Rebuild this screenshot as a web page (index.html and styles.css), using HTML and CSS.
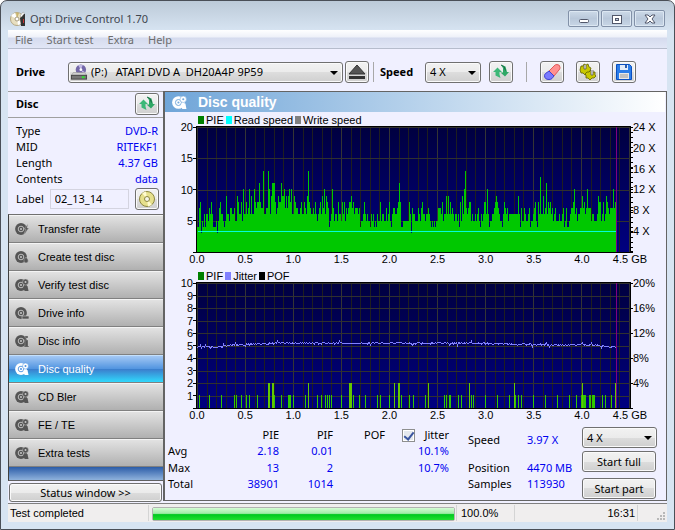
FILE: index.html
```html
<!DOCTYPE html>
<html lang="en">
<head>
  <meta charset="UTF-8" />
  <meta name="viewport" content="width=device-width, initial-scale=1.0"/>
  <title>Opti Drive Control 1.70</title>
  <link rel="stylesheet" href="styles.css">
</head>
<body>

  <svg class="sprite" aria-hidden="true">
    <symbol id="disc" viewBox="0 0 14 14">
      <circle cx="6" cy="7" r="5.900" fill="currentColor"/>
      <circle cx="6" cy="7" r="2.800" fill="none" stroke="var(--hole)" stroke-width="0.900"/>
      <circle cx="6" cy="7" r="1" fill="var(--hole)"/>
    </symbol>
    <symbol id="lens" viewBox="0 0 14 14">
      <use href="#disc"/>
      <circle cx="10.500" cy="4" r="3" fill="currentColor" stroke="var(--hole)" stroke-width="0.500"/>
      <circle cx="10.500" cy="4" r="1" fill="var(--hole)"/>
      <path d="M8.500 8h4l1 5h-4z" fill="currentColor"/>
    </symbol>
    <symbol id="refresh" viewBox="0 0 18 18">
      <path d="M1 9l4.500-4.500L10 9H7.500v2.500l1 3.500-5-2.500V9z" fill="#3cb878"/>
      <path d="M17 9l-4 4.500L8.500 9.500H11V5L9 2l4.500 1.500 1.500 5.500z" fill="#2fa866"/>
      <path d="M9 2l3 1.500 1.500 4" fill="none" stroke="#146b42"/>
    </symbol>
  </svg>

  <div class="window">
    <header class="titlebar">
      <svg class="app-icon" viewBox="0 0 16 16">
        <circle cx="7" cy="8" r="6.500" fill="#e8dfc0" stroke="#b4a884"/>
        <path d="M7 8L1 5a7 7 0 0 1 4-3zM7 8l5 4a7 7 0 0 1-4 2z" fill="#fff"/>
        <path d="M7 8L6 1.500l3 .5z" fill="#c9b56e"/>
        <circle cx="7" cy="8" r="2" fill="#fff" stroke="#a59b80"/>
        <path d="M10 7l4-4h1v12h-4z" fill="#333"/>
        <path d="M10 5l3-4 1.500 1-3 4z" fill="#fff" stroke="#888" stroke-width="0.500"/>
        <path d="M13 8h1v4h-1z" fill="#c33"/>
      </svg>
      <span class="title">Opti Drive Control 1.70</span>
      <div class="window-buttons">
        <button aria-label="Minimize"><svg viewBox="0 0 12 12"><rect x="1.500" y="6.500" width="9" height="3" rx="1" fill="#fff" stroke="#51576a"/></svg></button>
        <button aria-label="Maximize"><svg viewBox="0 0 12 12"><rect x="1.500" y="2.500" width="9" height="8" fill="#fff" stroke="#51576a"/><rect x="4.500" y="5.500" width="3" height="2" fill="#c2cee0" stroke="#51576a"/></svg></button>
        <button aria-label="Close"><svg viewBox="0 0 12 12"><path d="M1 2h3l2 2 2-2h3L8 6l3 4H8L6 8l-2 2H1l3-4z" fill="#fff" stroke="#51576a"/></svg></button>
      </div>
    </header>

    <nav class="menubar">
      <button>File</button>
      <button>Start test</button>
      <button>Extra</button>
      <button>Help</button>
    </nav>

    <div class="toolbar">
      <label class="strong drive-label" for="drive">Drive</label>
      <div class="dropdown drive-select">
        <svg class="drive-icon" viewBox="0 0 18 18">
          <circle cx="11" cy="6" r="5.500" fill="#7468a8"/>
          <path d="M11 6L8 1h5zM11 6l5 3-2 2z" fill="#c4bbe6"/>
          <circle cx="11" cy="6" r="1.500" fill="#fff"/>
          <path d="M3 9h12l2 3H1z" fill="#d0d0d0" stroke="#888" stroke-width="0.500"/>
          <rect x="1" y="12" width="16" height="4" fill="#777" stroke="#444"/>
          <rect x="12" y="13" width="3" height="2" fill="#2fe02f"/>
        </svg>
        <select id="drive"><option>(P:) &nbsp; ATAPI DVD A &nbsp;DH20A4P 9P59</option></select>
      </div>
      <button class="tool" aria-label="Eject">
        <svg viewBox="0 0 18 18"><path d="M9 2l8 9H1z" fill="#555" stroke="#333"/><path d="M1 13h16v3H1z" fill="#333"/></svg>
      </button>
      <span class="divider"></span>
      <label class="strong speed-label" for="speed">Speed</label>
      <div class="dropdown speed-select">
        <select id="speed"><option>4 X</option></select>
      </div>
      <button class="tool" aria-label="Refresh"><svg viewBox="0 0 18 18"><use href="#refresh"/></svg></button>
      <span class="divider wide"></span>
      <button class="tool" aria-label="Erase">
        <svg viewBox="0 0 18 18">
          <path d="M6 8l5-5q1-1.500 3-1.500 3 0 3 3 0 1.500-1 2.500l-5 6z" fill="#ff9090" stroke="#e05858"/>
          <path d="M6 8l5 5-2 2.500q-1 1-3 1-4.500 0-4.500-4 0-1 1-2z" fill="#7a7aff" stroke="#4040d0"/>
        </svg>
      </button>
      <button class="tool spaced" aria-label="Options">
        <svg viewBox="0 0 18 18">
          <g fill="#c8c800" stroke="#5e5e00" stroke-width="0.800">
            <path d="M2 3l2 0 1-2 2 1 2-1 1 3 2 1-1 3-1 3-2 0-2 1-2-2-2 0-1-3z"/>
            <path d="M8 9l2 0 2-2 2 2 2 0 0 3 1 1-2 2-2 0-2 2-2-2-2 0 0-3-1-1z"/>
          </g>
          <path d="M5 2v4h2V2M12 7v5h2V7" fill="#eee" stroke="#555" stroke-width="0.800"/>
        </svg>
      </button>
      <button class="tool spaced" aria-label="Save">
        <svg viewBox="0 0 18 18">
          <path d="M1.500 1.500h13l2 2v13h-15z" fill="#2b7de9" stroke="#0b4fc0"/>
          <rect x="5" y="2" width="8" height="5" fill="#e4ecf8"/><rect x="10" y="2" width="2" height="3" fill="#2b5db0"/>
          <rect x="4" y="10" width="10" height="6" fill="#e8e8e8"/><path d="M5 12h8M5 14h8" stroke="#999"/>
        </svg>
      </button>
    </div>

    <div class="content">
      <aside class="sidebar">
        <div class="disc-head">
          <span class="strong">Disc</span>
          <button class="tool" aria-label="Refresh disc"><svg viewBox="0 0 18 18"><use href="#refresh"/></svg></button>
        </div>
        <dl class="disc-info">
          <div><dt>Type</dt><dd>DVD-R</dd></div>
          <div><dt>MID</dt><dd>RITEKF1</dd></div>
          <div><dt>Length</dt><dd>4.37 GB</dd></div>
          <div><dt>Contents</dt><dd>data</dd></div>
        </dl>
        <div class="disc-label">
          <label for="label">Label</label>
          <input type="text" id="label" value="02_13_14">
          <button class="tool" aria-label="Edit label">
            <svg viewBox="0 0 18 18">
              <circle cx="9" cy="9" r="7.500" fill="#e6e08c" stroke="#8c8640"/>
              <path d="M9 9L4 3l4-1.500zM9 9l5 6-4 1.500z" fill="#fffbd0"/>
              <circle cx="9" cy="9" r="2.500" fill="#f6f6e8" stroke="#8c8640"/>
            </svg>
          </button>
        </div>
        <nav class="tests">
          <button><svg viewBox="0 0 14 14"><use href="#disc"/><path d="M13 2L9 7h2l-2 5 5-6h-2z" fill="currentColor" stroke="#ccc" stroke-width="0.400"/></svg>Transfer rate</button>
          <button><svg viewBox="0 0 14 14"><use href="#disc"/><path d="M11 7q3 3 2 5-2 2-4 0-1-2 2-5z" fill="currentColor" stroke="#ccc" stroke-width="0.400"/></svg>Create test disc</button>
          <button><svg viewBox="0 0 14 14"><use href="#lens"/></svg>Verify test disc</button>
          <button><svg viewBox="0 0 14 14"><use href="#disc"/><path d="M7 10h7v3H7z" fill="currentColor" stroke="#ccc" stroke-width="0.600"/></svg>Drive info</button>
          <button><svg viewBox="0 0 14 14"><use href="#disc"/><path d="M10 2h3v2h-3zM9 6h4v6h1v1H9v-1h1V7H9z" fill="currentColor" stroke="#ccc" stroke-width="0.300"/></svg>Disc info</button>
          <button class="active"><svg viewBox="0 0 14 14"><use href="#lens"/></svg>Disc quality</button>
          <button><svg viewBox="0 0 14 14"><use href="#lens"/></svg>CD Bler</button>
          <button><svg viewBox="0 0 14 14"><use href="#lens"/></svg>FE / TE</button>
          <button><svg viewBox="0 0 14 14"><use href="#lens"/></svg>Extra tests</button>
        </nav>
        <button class="push status-toggle">Status window &gt;&gt;</button>
      </aside>

      <main class="panel">
        <h1><svg viewBox="0 0 14 14"><use href="#lens"/></svg>Disc quality</h1>

        <section class="chart">
          <div class="legend"><i class="green"></i>PIE<i class="cyan"></i>Read speed<i class="gray"></i>Write speed</div>
          <div class="y-axis left"><span>20</span><span>15</span><span>10</span><span>5</span><span></span></div>
          <svg class="plot" id="pie-plot" viewBox="0 0 433 125" preserveAspectRatio="none"></svg>
          <div class="y-axis right fine"><span>24 X</span><span>20 X</span><span>16 X</span><span>12 X</span><span>8 X</span><span>4 X</span><span></span></div>
          <div class="x-axis"><span>0.0</span><span>0.5</span><span>1.0</span><span>1.5</span><span>2.0</span><span>2.5</span><span>3.0</span><span>3.5</span><span>4.0</span><span>4.5 GB</span></div>
        </section>

        <section class="chart">
          <div class="legend"><i class="green"></i>PIF<i class="violet"></i>Jitter<i class="black"></i>POF</div>
          <div class="y-axis left"><span>10</span><span>9</span><span>8</span><span>7</span><span>6</span><span>5</span><span>4</span><span>3</span><span>2</span><span>1</span><span></span></div>
          <svg class="plot" id="pif-plot" viewBox="0 0 433 125" preserveAspectRatio="none"></svg>
          <div class="y-axis right"><span>20%</span><span>16%</span><span>12%</span><span>8%</span><span>4%</span><span></span></div>
          <div class="x-axis"><span>0.0</span><span>0.5</span><span>1.0</span><span>1.5</span><span>2.0</span><span>2.5</span><span>3.0</span><span>3.5</span><span>4.0</span><span>4.5 GB</span></div>
        </section>

        <div class="results">
          <table>
            <tr><th></th><th>PIE</th><th>PIF</th><th>POF</th>
              <th><label class="jitter"><input type="checkbox" checked>Jitter</label></th></tr>
            <tr><th>Avg</th><td>2.18</td><td>0.01</td><td></td><td>10.1%</td></tr>
            <tr><th>Max</th><td>13</td><td>2</td><td></td><td>10.7%</td></tr>
            <tr><th>Total</th><td>38901</td><td>1014</td><td></td><td></td></tr>
          </table>
          <dl class="progress-info">
            <dt class="first">Speed</dt><dd class="first">3.97 X</dd>
            <dt>Position</dt><dd>4470 MB</dd>
            <dt>Samples</dt><dd>113930</dd>
          </dl>
          <div class="actions">
            <div class="dropdown"><select aria-label="Test speed"><option>4 X</option></select></div>
            <button class="push">Start full</button>
            <button class="push">Start part</button>
          </div>
        </div>
      </main>
    </div>

    <footer class="statusbar">
      <span class="message">Test completed</span>
      <div class="bar"><div class="fill" style="width: 100%"></div></div>
      <span class="percent">100.0%</span>
      <span class="clock">16:31</span>
      <svg class="grip" viewBox="0 0 10 10"><path d="M7 1h2v2H7zM4 4h2v2H4zM7 4h2v2H7zM1 7h2v2H1zM4 7h2v2H4zM7 7h2v2H7z" fill="#b8b8b8"/></svg>
    </footer>
  </div>

  <script src="script.js"></script>
</body>
</html>
```
FILE: styles.css
```css
* {
  box-sizing: border-box;
}

body {
  margin: 0;
  background: #fff;
  color: #000;
  font: 11px/16px 'Noto Sans', 'Open Sans', sans-serif;
}

button, select, input {
  font: inherit;
  color: inherit;
}

.sprite {
  position: absolute;
  width: 0;
  height: 0;
}

.window {
  display: flex;
  flex-direction: column;
  min-height: 100vh;
  padding: 0 7px 7px;
  border: 1px solid #4a4f57;
  border-radius: 7px 7px 0 0;
  background: linear-gradient(#bccad8, #d7e4f2 30px);
}

/* title bar and menu */
.titlebar {
  display: flex;
  align-items: center;
  height: 29px;
  padding: 6px 2px 0;
}

.app-icon {
  width: 16px;
  height: 16px;
}

.title {
  margin-left: 4px;
  color: #3f454e;
}

.window-buttons {
  display: flex;
  gap: 2px;
  margin-left: auto;
}

.window-buttons button {
  display: flex;
  align-items: center;
  justify-content: center;
  width: 31px;
  height: 17px;
  padding: 0;
  border: 1px solid #8291a8;
  border-radius: 2px;
  background: linear-gradient(#cddae8, #b9c8da 50%, #c8d6e6);
  box-shadow: inset 0 0 0 1px #dce7f2;
}

.window-buttons svg {
  width: 12px;
  height: 12px;
}

.menubar {
  display: flex;
  gap: 14px;
  height: 19px;
  padding: 2px 7px 0;
  border-bottom: 1px solid #b6bccc;
  background: linear-gradient(#fff, #eef1f9 7px, #d5dbee 8px, #e1e6f6);
}

.menubar button {
  padding: 0;
  border: 0;
  background: none;
  color: #6d6d6d;
}

/* toolbar */
.toolbar {
  display: flex;
  align-items: center;
  height: 42px;
  padding: 4px 8px 0;
  background: #f0f0ff;
}

.strong {
  font-weight: 700;
}

.drive-label {
  width: 52px;
}

.speed-label {
  width: 45px;
}

.dropdown {
  position: relative;
}

.dropdown::after {
  content: '';
  position: absolute;
  top: 9px;
  right: 5px;
  border: 4px solid transparent;
  border-top-color: #000;
  border-bottom: 0;
  pointer-events: none;
}

.dropdown select {
  display: block;
  appearance: none;
  width: 100%;
  height: 21px;
  padding: 0 4px;
  border: 1px solid #707070;
  border-radius: 3px;
  background: linear-gradient(#f2f2f2, #ebebeb 50%, #dddddd 50%, #cfcfcf);
  box-shadow: inset 0 0 0 1px #fafafa;
}

.drive-select {
  flex: 0 1 275px;
  margin-right: 2px;
}

.drive-select select {
  padding-left: 22px;
}

.drive-icon {
  position: absolute;
  top: 2px;
  left: 2px;
  width: 18px;
  height: 17px;
}

.speed-select {
  width: 56px;
  margin-right: 8px;
}

.tool {
  display: flex;
  flex: none;
  align-items: center;
  justify-content: center;
  width: 24px;
  height: 22px;
  padding: 0;
  border: 1px solid #707070;
  border-radius: 3px;
  background: linear-gradient(#f2f2f2, #ebebeb 50%, #dddddd 50%, #cfcfcf);
  box-shadow: inset 0 0 0 1px #fafafa;
}

.tool svg {
  width: 18px;
  height: 18px;
}

.tool.spaced {
  margin-left: 12px;
}

.divider {
  width: 1px;
  height: 20px;
  margin: 0 6px 0 4px;
  background: #a8a8a8;
}

.divider.wide {
  margin: 0 13px;
}

.content {
  display: flex;
  flex: 1;
  background: #f0f0ff;
}

/* sidebar */
.sidebar {
  display: flex;
  flex-direction: column;
  width: 155px;
}

.disc-head {
  display: flex;
  align-items: center;
  justify-content: space-between;
  height: 27px;
  padding: 0 4px 2px 8px;
  border-top: 1px solid #a0a0a0;
  border-bottom: 1px solid #a0a0a0;
}

.disc-info {
  margin: 0;
  padding: 5px 5px 0 8px;
}

.disc-info div {
  display: flex;
  justify-content: space-between;
}

dd, td {
  margin: 0;
  color: #0000f0;
}

.disc-label {
  display: flex;
  align-items: center;
  height: 27px;
  padding: 0 4px 4px 8px;
}

.disc-label input {
  flex: 1;
  min-width: 0;
  height: 20px;
  margin: 0 6px;
  padding: 0 4px;
  border: 1px solid #d4d4e0;
  background: #f0f0ff;
}

.tests {
  flex: 1;
  border-left: 1px solid #404040;
  border-top: 1px solid #707070;
  border-bottom: 1px solid #606060;
  background: linear-gradient(#2456a4, #8fb2dc) bottom / 100% 14px no-repeat;
}

.tests button {
  display: flex;
  align-items: center;
  width: 100%;
  height: 28px;
  padding: 0 6px;
  border: 0;
  border-bottom: 1px solid #808080;
  border-top: 1px solid #f4f4f4;
  background: linear-gradient(#e2e2e2, #b0b0b0);
  font-family: 'Liberation Sans', Arial, sans-serif;
  --hole: #c8c8c8;
}

.tests svg {
  width: 14px;
  height: 14px;
  margin-right: 9px;
  color: #555;
}

.tests .active {
  border-top-color: #c4e0fc;
  background: linear-gradient(#a4c8f4, #5094e0 50%, #3c7ccc 50%, #30d8fc);
  color: #fff;
  --hole: #4a90e0;
}

.tests .active svg {
  color: #fff;
}

.push {
  height: 21px;
  padding: 0;
  border: 1px solid #707070;
  border-radius: 3px;
  background: linear-gradient(#f2f2f2, #ebebeb 50%, #dddddd 50%, #cfcfcf);
  box-shadow: inset 0 0 0 1px #fafafa;
}

.status-toggle {
  height: 19px;
  margin: 2px 1px 1px;
  line-height: 15px;
}

/* main panel */
.panel {
  flex: 1;
  min-width: 0;
  margin-bottom: 2px;
  border: 1px solid #646464;
  border-left-width: 2px;
}

.panel h1 {
  display: flex;
  align-items: center;
  height: 20px;
  margin: 0 1px 0 0;
  padding-left: 7px;
  background: linear-gradient(90deg, #6fa5d8, #fff);
  color: #fff;
  font: bold 14px/20px 'Liberation Sans', Arial, sans-serif;
  --hole: #74a8da;
}

.panel h1 svg {
  width: 15px;
  height: 15px;
  margin-right: 11px;
}

.chart {
  display: grid;
  grid-template-columns: 31px 1fr 35px;
  font: 11px/12px 'Liberation Sans', Arial, sans-serif;
}

.legend {
  display: flex;
  grid-column: 2 / 4;
  align-items: center;
  height: 14px;
  padding: 1px 0 0 2px;
}

.legend i {
  width: 6px;
  height: 8px;
  margin: 0 2px;
}

.legend i:first-child {
  margin-left: 0;
}

.green { background: #008000; }
.cyan { background: #00ffff; }
.gray { background: #808080; }
.violet { background: #8080ff; }
.black { background: #000; }

.plot {
  display: block;
  width: 100%;
  height: 127px;
  border: 1px solid #000;
  background: linear-gradient(#000040, #000080);
  shape-rendering: crispEdges;
}

.y-axis {
  display: flex;
  flex-direction: column;
  justify-content: space-between;
  padding: 1px 0;
}

.y-axis span {
  display: flex;
  align-items: center;
  height: 0;
  white-space: nowrap;
}

.left span {
  justify-content: flex-end;
}

.left span::after,
.right span::before {
  content: '';
  width: 3px;
  height: 1px;
  background: #000;
}

.right span::before {
  width: 2px;
}

.fine {
  background: repeating-linear-gradient(#000 0 1px, transparent 1px 5px) 0 1px / 2px 100% no-repeat;
}

.x-axis {
  display: flex;
  grid-column: 2;
  justify-content: space-between;
  height: 15px;
  padding: 0 1px;
}

.x-axis span {
  display: flex;
  justify-content: center;
  width: 0;
  white-space: nowrap;
}

/* result figures under the charts */
.results {
  display: flex;
  padding: 3px 9px 0 3px;
}

.results table {
  flex: none;
  width: 281px;
  height: 65px;
  border-collapse: collapse;
}

.results th, .results td {
  height: 16px;
  padding: 0;
  font-weight: 400;
  text-align: right;
}

.results th:first-child {
  width: 40px;
  text-align: left;
}

.results th:nth-child(2) { width: 71px; }
.results th:nth-child(3) { width: 54px; }
.results th:nth-child(4) { width: 52px; }

.jitter {
  display: flex;
  align-items: center;
  justify-content: space-between;
  padding-left: 17px;
}

.jitter input {
  display: grid;
  place-items: center;
  appearance: none;
  width: 13px;
  height: 13px;
  margin: 0;
  border: 1px solid #8e8f8f;
  background: #e4e8ee;
  box-shadow: inset 0 0 0 1px #fff;
}

.jitter input:checked::before {
  content: '';
  width: 4px;
  height: 8px;
  border: solid #3a55a0;
  border-width: 0 2px 2px 0;
  transform: rotate(38deg);
}

.progress-info {
  display: grid;
  flex: 1;
  grid-template-columns: 59px 1fr;
  align-content: start;
  margin: 0;
  padding: 5px 0 0 19px;
}

.progress-info .first {
  margin-bottom: 12px;
}

.actions {
  display: flex;
  flex-direction: column;
  gap: 3px;
  width: 75px;
}

.actions .push {
  margin-right: 1px;
}

.actions .push + .push {
  margin-top: 3px;
}

/* status bar */
.statusbar {
  display: flex;
  align-items: center;
  height: 19px;
  border-top: 1px solid #808080;
  background: #f0eeee;
  font-family: 'Liberation Sans', Arial, sans-serif;
}

.message {
  width: 141px;
  padding-left: 2px;
  border-right: 1px solid #d4d4d4;
}

.bar {
  flex: 1;
  height: 14px;
  margin: 1px 1px 0 3px;
  border: 1px solid #b2b2b2;
  border-radius: 2px;
  background: #e6e6e6;
}

.fill {
  height: 100%;
  background: linear-gradient(#d4fcd4, #a0eca8 45%, #00c820 55%, #20e030);
}

.percent {
  width: 59px;
  padding-left: 4px;
  border-left: 1px solid #d4d4d4;
  border-right: 1px solid #d4d4d4;
}

.clock {
  width: 123px;
  padding-right: 2px;
  border-right: 1px solid #d4d4d4;
  text-align: right;
}

.grip {
  width: 10px;
  height: 10px;
  margin: 6px 1px 0 18px;
}
```
FILE: script.js
```js
// PIE count of each sample, one hex digit per sample
const pie = [
  '447835464665768644453578665459',
  '6657766755986685a66867a6966a87',
  '88b877d6677da69bbb867988b99a79',
  '79a8a6698776678668769d87667686',
  '5678697a6987456a75665866586857',
  '678897867776745568656554656454',
  '6558566557568546776678b8445555',
  '558637665557657866566765454545',
  '577768566969686765665648596ad7',
  '67885655656754656886a645566789',
  '876554687675666666666964755765',
  '5674556785486c66967b6878675675',
  '55655674574456778a675667797867',
  'a7775665556988568569876777a788'
].join('');

// sample positions with one and with two PIF errors
const pif1 = [2, 12, 24, 37, 39, 44, 49, 52, 60, 77, 84, 91, 92, 93, 96, 108, 120, 124, 128, 130,
  132, 134, 144, 156, 162, 168, 180, 183, 192, 204, 212, 216, 228, 247, 249, 252, 253, 261, 264,
  274, 276, 288, 300, 312, 318, 321, 324, 336, 348, 360, 372, 379, 384, 386, 387, 388, 392, 393,
  395, 396, 397, 405, 408, 414];
const pif2 = [71, 72, 75, 76, 111, 152, 153, 154, 197, 201, 202, 231, 272, 317, 385, 418];

// jitter trend as [sample, level]
const trend = [[0, 4.85], [24, 4.88], [30, 5.03], [60, 5.1], [75, 5.18], [270, 5.18], [330, 5.08], [400, 5.02], [418, 4.86]];

const rect = (x, y, w, h, fill) => `<rect x="${x}" y="${y}" width="${w}" height="${h}" fill="${fill}"/>`;

function grid(rows) {
  let out = '';
  for (let i = 0; i <= 45; i++) {
    out += rect(Math.round(i * 9.6), 0, 1, 125, i % 5 ? '#1e1e20' : '#343434');
  }
  for (let i = 0; i < rows; i++) {
    out += rect(0, Math.round(i * 125 / rows), 433, 1, '#303030');
  }
  return out;
}

function level(x) {
  let i = 1;
  while (trend[i][0] < x) i++;
  const [x0, y0] = trend[i - 1];
  const [x1, y1] = trend[i];
  return y0 + (y1 - y0) * (x - x0) / (x1 - x0);
}

let bars = '';
for (let i = 0; i < pie.length; i++) {
  const h = Math.round(parseInt(pie[i], 16) * 6.25);
  bars += rect(i, 125 - h, 1, h, '#00c800');
}
document.getElementById('pie-plot').innerHTML =
  grid(4) + bars + rect(1, 104, 418, 1, '#00ffd8') + rect(419, 0, 1, 125, '#800080');

let marks = '';
pif1.forEach(x => marks += rect(x, 112, 1, 13, '#32c800'));
pif2.forEach(x => marks += rect(x, 100, 1, 25, '#64c800'));

let seed = 7;
const points = [];
for (let x = 0; x <= 418; x++) {
  seed = (seed * 1103 + 12345) % 65536;
  const noise = seed / 65536;
  const jump = noise > 0.97 ? 0.1 : noise < 0.02 ? -0.1 : 0;
  const y = 125 - (level(x) + (noise - 0.5) * 0.13 + jump) * 12.5;
  points.push(x + 0.5 + ',' + y.toFixed(1));
}
document.getElementById('pif-plot').innerHTML =
  grid(10) + marks + `<polyline points="${points.join(' ')}" fill="none" stroke="#8080ff"/>` + rect(419, 0, 1, 125, '#800080');
```
